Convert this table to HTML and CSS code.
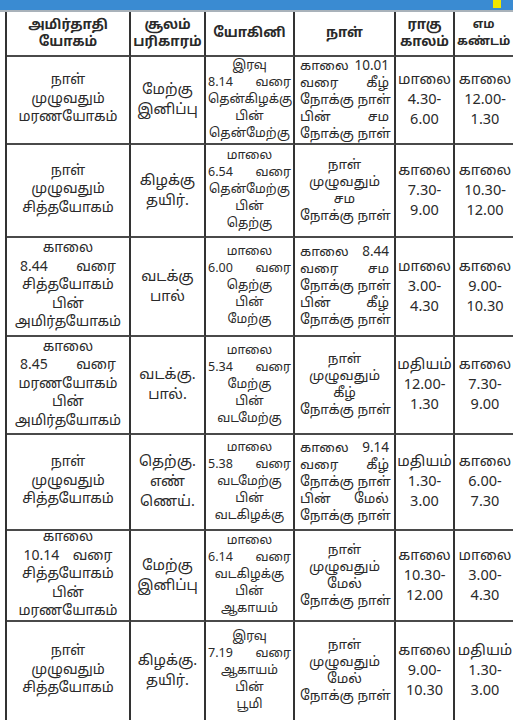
FILE: index.html
```html
<!DOCTYPE html>
<html lang="ta">
<head>
<meta charset="utf-8">
<link rel="stylesheet" href="styles.css">
</head>
<body>
<div class="topbar"><span class="flag"></span></div>
<div class="grid">
  <div class="c h"><div class="in">அமிர்தாதி<br>யோகம்</div></div>
  <div class="c h"><div class="in">சூலம்<br>பரிகாரம்</div></div>
  <div class="c h"><div class="in">யோகினி</div></div>
  <div class="c h"><div class="in">நாள்</div></div>
  <div class="c h"><div class="in">ராகு<br>காலம்</div></div>
  <div class="c h"><div class="in">எம<br>கண்டம்</div></div>

  <div class="c"><div class="in">நாள்<br>முழுவதும்<br>மரணயோகம்</div></div>
  <div class="c"><div class="in">மேற்கு<br>இனிப்பு</div></div>
  <div class="c"><div class="in">இரவு<span class="j">8.14 வரை</span>தென்கிழக்கு<br>பின்<br>தென்மேற்கு</div></div>
  <div class="c"><div class="in"><span class="j">காலை 10.01</span><span class="j">வரை கீழ்</span><span class="j">நோக்கு நாள்</span><span class="j">பின் சம</span><span class="j">நோக்கு நாள்</span></div></div>
  <div class="c"><div class="in">மாலை<br>4.30-<br>6.00</div></div>
  <div class="c"><div class="in">காலை<br>12.00-<br>1.30</div></div>

  <div class="c"><div class="in">நாள்<br>முழுவதும்<br>சித்தயோகம்</div></div>
  <div class="c"><div class="in">கிழக்கு<br>தயிர்.</div></div>
  <div class="c"><div class="in">மாலை<span class="j">6.54 வரை</span>தென்மேற்கு<br>பின்<br>தெற்கு</div></div>
  <div class="c"><div class="in">நாள்<br>முழுவதும்<br>சம<br>நோக்கு நாள்</div></div>
  <div class="c"><div class="in">காலை<br>7.30-<br>9.00</div></div>
  <div class="c"><div class="in">காலை<br>10.30-<br>12.00</div></div>

  <div class="c"><div class="in">காலை<span class="j">8.44 வரை</span>சித்தயோகம்<br>பின்<br>அமிர்தயோகம்</div></div>
  <div class="c"><div class="in">வடக்கு<br>பால்</div></div>
  <div class="c"><div class="in">மாலை<span class="j">6.00 வரை</span>தெற்கு<br>பின்<br>மேற்கு</div></div>
  <div class="c"><div class="in"><span class="j">காலை 8.44</span><span class="j">வரை சம</span><span class="j">நோக்கு நாள்</span><span class="j">பின் கீழ்</span><span class="j">நோக்கு நாள்</span></div></div>
  <div class="c"><div class="in">மாலை<br>3.00-<br>4.30</div></div>
  <div class="c"><div class="in">காலை<br>9.00-<br>10.30</div></div>

  <div class="c"><div class="in">காலை<span class="j">8.45 வரை</span>மரணயோகம்<br>பின்<br>அமிர்தயோகம்</div></div>
  <div class="c"><div class="in">வடக்கு.<br>பால்.</div></div>
  <div class="c"><div class="in">மாலை<span class="j">5.34 வரை</span>மேற்கு<br>பின்<br>வடமேற்கு</div></div>
  <div class="c"><div class="in">நாள்<br>முழுவதும்<br>கீழ்<br>நோக்கு நாள்</div></div>
  <div class="c"><div class="in">மதியம்<br>12.00-<br>1.30</div></div>
  <div class="c"><div class="in">காலை<br>7.30-<br>9.00</div></div>

  <div class="c"><div class="in">நாள்<br>முழுவதும்<br>சித்தயோகம்</div></div>
  <div class="c"><div class="in">தெற்கு.<br>எண்<br>ணெய்.</div></div>
  <div class="c"><div class="in">மாலை<span class="j">5.38 வரை</span>வடமேற்கு<br>பின்<br>வடகிழக்கு</div></div>
  <div class="c"><div class="in"><span class="j">காலை 9.14</span><span class="j">வரை கீழ்</span><span class="j">நோக்கு நாள்</span><span class="j">பின் மேல்</span><span class="j">நோக்கு நாள்</span></div></div>
  <div class="c"><div class="in">மதியம்<br>1.30-<br>3.00</div></div>
  <div class="c"><div class="in">காலை<br>6.00-<br>7.30</div></div>

  <div class="c"><div class="in">காலை<span class="j">10.14 வரை</span>சித்தயோகம்<br>பின்<br>மரணயோகம்</div></div>
  <div class="c"><div class="in">மேற்கு<br>இனிப்பு</div></div>
  <div class="c"><div class="in">மாலை<span class="j">6.14 வரை</span>வடகிழக்கு<br>பின்<br>ஆகாயம்</div></div>
  <div class="c"><div class="in">நாள்<br>முழுவதும்<br>மேல்<br>நோக்கு நாள்</div></div>
  <div class="c"><div class="in">காலை<br>10.30-<br>12.00</div></div>
  <div class="c"><div class="in">மாலை<br>3.00-<br>4.30</div></div>

  <div class="c"><div class="in">நாள்<br>முழுவதும்<br>சித்தயோகம்</div></div>
  <div class="c"><div class="in">கிழக்கு.<br>தயிர்.</div></div>
  <div class="c"><div class="in">இரவு<span class="j">7.19 வரை</span>ஆகாயம்<br>பின்<br>பூமி</div></div>
  <div class="c"><div class="in">நாள்<br>முழுவதும்<br>மேல்<br>நோக்கு நாள்</div></div>
  <div class="c"><div class="in">காலை<br>9.00-<br>10.30</div></div>
  <div class="c"><div class="in">மதியம்<br>1.30-<br>3.00</div></div>
</div>
</body>
</html>
```

FILE: styles.css
```css
html, body {
  margin: 0;
  padding: 0;
  background: #ffffff;
}
body {
  width: 513px;
  height: 720px;
  overflow: hidden;
  font-family: "Noto Sans Tamil", "Lohit Tamil", "Noto Sans", "DejaVu Sans", sans-serif;
  color: #2a2a2a;
}
.topbar {
  height: 10px;
  background: #3a8bd2;
  border-bottom: 2px solid #a9b2ba;
  position: relative;
}
.flag {
  position: absolute;
  left: 493px;
  top: 0;
  width: 8px;
  height: 8px;
  background: #f2e600;
}
.grid {
  display: grid;
  margin-left: 5px;
  width: 514px;
  grid-template-columns: 124px 75px 89px 101px 59px 62px;
  grid-template-rows: 45px 88px 93px 99px 98px 96px 91px 100px;
  border-left: 2px solid #333;
}
.c {
  box-sizing: border-box;
  border-right: 2px solid #333;
  border-bottom: 2px solid #4a4a4a;
  display: flex;
  justify-content: center;
  align-items: center;
  text-align: center;
  white-space: nowrap;
  font-size: 14px;
  line-height: 18.5px;
  padding: 0 2px;
}
.in {
  display: block;
}
.c:nth-child(6n+1) .j {
  margin: 0 5px;
}
.c:nth-child(6n+2) {
  font-size: 14.5px;
  line-height: 20px;
}
.c:nth-child(6n+3) {
  font-size: 12.5px;
  line-height: 17px;
  padding: 0 2px;
}
.c:nth-child(6n+3) .in {
  width: 100%;
}
.c:nth-child(6n+4) {
  font-size: 13.5px;
  line-height: 17px;
  padding: 0 5px;
}
.c:nth-child(6n+4) .in {
  width: 100%;
}
.c:nth-child(6n+5),
.c:nth-child(6n) {
  font-size: 14.5px;
  line-height: 20px;
  padding: 0;
}
.c.h {
  font-weight: bold;
  font-size: 13.5px;
  line-height: 17px;
  padding: 0;
}
.c.h:nth-child(6) {
  font-size: 12px;
  justify-content: flex-start;
  padding-left: 2px;
}
.j {
  display: block;
  text-align: justify;
  text-align-last: justify;
}
```
